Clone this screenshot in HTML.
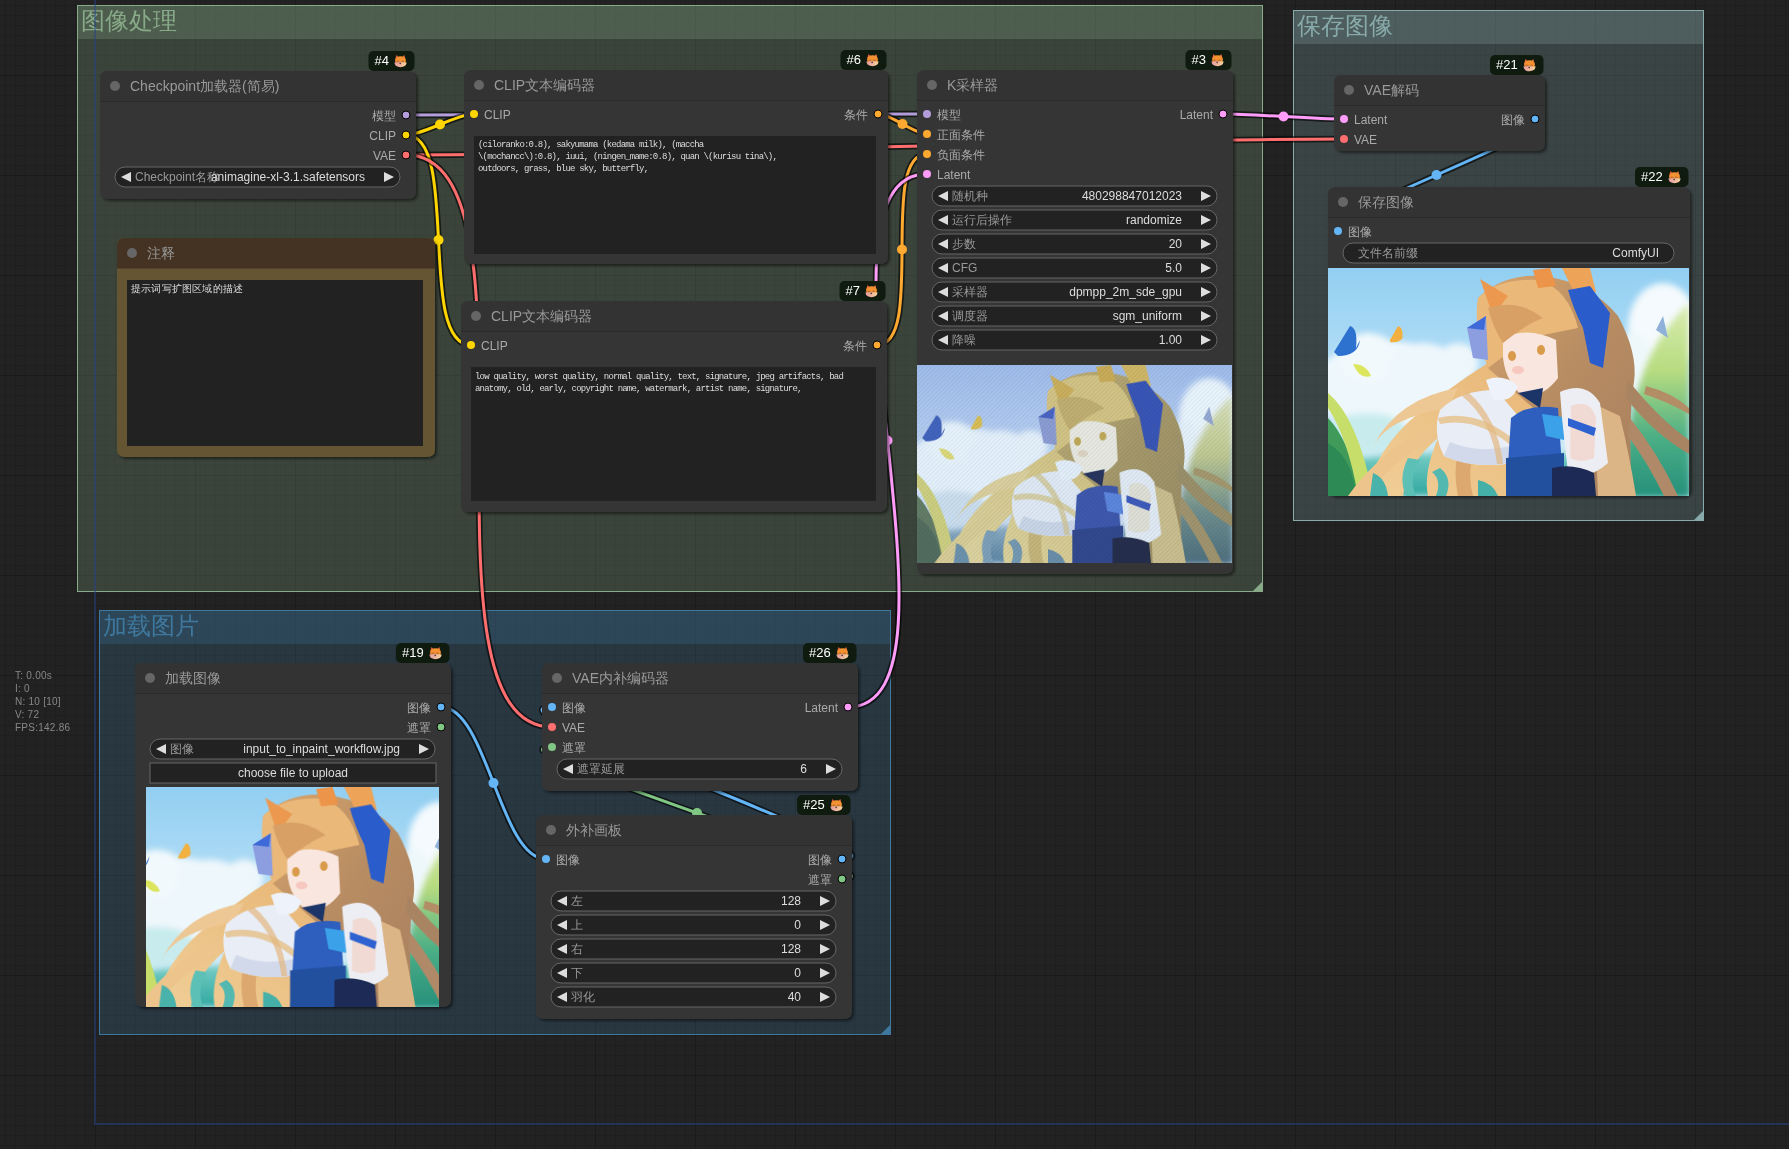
<!DOCTYPE html><html><head><meta charset="utf-8"><style>html,body{margin:0;padding:0;width:1789px;height:1149px;overflow:hidden;background:#222;} svg{display:block;will-change:transform}</style></head><body>
<svg width="1789" height="1149" viewBox="0 0 1789 1149" font-family="'Liberation Sans', sans-serif">
<defs>
<pattern id="gminor" width="10" height="10" patternUnits="userSpaceOnUse" x="5" y="5"><rect width="10" height="10" fill="#222"/><rect width="10" height="1" fill="#1e1e1e"/><rect width="1" height="10" fill="#1e1e1e"/></pattern>
<pattern id="gmajor" width="100" height="100" patternUnits="userSpaceOnUse" x="95" y="75"><rect width="100" height="1" fill="#1a1a1a"/><rect width="1" height="100" fill="#1a1a1a"/></pattern>
<filter id="sh" x="-5%" y="-5%" width="110%" height="110%"><feDropShadow dx="2" dy="2" stdDeviation="1.5" flood-color="#000" flood-opacity="0.5"/></filter>

<linearGradient id="skyg" x1="0" y1="0" x2="0" y2="1">
 <stop offset="0" stop-color="#92cff2"/><stop offset="0.45" stop-color="#b4def6"/><stop offset="1" stop-color="#dff1f8"/>
</linearGradient>
<radialGradient id="cloudg" cx="0.5" cy="0.5" r="0.5">
 <stop offset="0" stop-color="#ffffff"/><stop offset="0.7" stop-color="#f4fafd"/><stop offset="1" stop-color="#f4fafd" stop-opacity="0"/>
</radialGradient>
<linearGradient id="teal" x1="0" y1="0" x2="0" y2="1">
 <stop offset="0" stop-color="#7fd0c8"/><stop offset="1" stop-color="#2fa8a0"/>
</linearGradient>
<linearGradient id="plantR" x1="0" y1="0" x2="0" y2="1">
 <stop offset="0" stop-color="#d8ecb0"/><stop offset="0.35" stop-color="#b8dc80"/><stop offset="0.7" stop-color="#4aae86"/><stop offset="1" stop-color="#27907a"/>
</linearGradient>
<linearGradient id="hairR" x1="0" y1="0" x2="1" y2="1">
 <stop offset="0" stop-color="#d9a56c"/><stop offset="0.5" stop-color="#b88d63"/><stop offset="1" stop-color="#a88060"/>
</linearGradient>
<linearGradient id="hairL" x1="1" y1="0" x2="0" y2="1">
 <stop offset="0" stop-color="#e8b676"/><stop offset="1" stop-color="#f0cf98"/>
</linearGradient>
<filter id="soft" x="0" y="0" width="100%" height="100%"><feGaussianBlur stdDeviation="0.6"/></filter>
<filter id="blur3" x="-20%" y="-20%" width="140%" height="140%"><feGaussianBlur stdDeviation="3"/></filter>
<g id="scene">
 <rect width="361" height="228" fill="url(#skyg)"/>
 <g filter="url(#blur3)">
  <ellipse cx="60" cy="118" rx="75" ry="45" fill="#eef7fc"/>
  <ellipse cx="40" cy="90" rx="30" ry="25" fill="#f2f9fc"/>
  <ellipse cx="95" cy="100" rx="35" ry="25" fill="#eef7fc"/>
  <ellipse cx="130" cy="95" rx="20" ry="20" fill="#eef7fb"/>
  <ellipse cx="335" cy="60" rx="35" ry="45" fill="#f4fafd"/>
  <ellipse cx="305" cy="95" rx="20" ry="30" fill="#eef8fb"/>
  <ellipse cx="40" cy="165" rx="40" ry="20" fill="#c8ecee"/>
 </g>
 <path d="M0,228 L0,195 Q90,180 180,188 L361,180 L361,228 Z" fill="url(#teal)" filter="url(#blur3)"/>
 <path d="M361,35 Q325,70 312,115 Q298,160 292,228 L361,228 Z" fill="url(#plantR)" filter="url(#blur3)"/>
 <g filter="url(#soft)">
 <path d="M0,150 Q20,170 35,228 L0,228 Z" fill="#3f9a5a"/>
 <path d="M0,125 Q30,150 45,228 L30,228 Q20,170 0,140 Z" fill="#c8de6a"/>
 <path d="M0,175 Q25,190 28,228 L0,228 Z" fill="#2f8a55"/>
 <!-- left flowing hair -->
 <path d="M160,95 Q120,120 85,150 Q50,180 35,228 L75,228 Q80,195 110,170 Q95,205 100,228 L200,228 L205,140 Z" fill="url(#hairL)"/>
 <path d="M130,120 Q70,130 45,178 Q60,150 120,140 Z" fill="#eec894"/>
 <path d="M100,160 Q50,185 20,228 L40,228 Q60,195 105,172 Z" fill="#ecc48c"/>
 <path d="M150,150 Q120,180 130,228 L145,228 Q135,190 160,160 Z" fill="#dca870"/>
 <path d="M80,190 Q70,210 78,228 L88,228 Q80,210 92,192 Z" fill="#5cc0b6"/>
 <path d="M112,200 Q125,210 118,228 L108,228 Q114,212 104,204 Z" fill="#52b8b0"/><path d="M45,205 Q58,210 60,228 L42,228 Z" fill="#48b2aa"/><path d="M150,212 Q165,215 170,228 L150,228 Z" fill="#44b0a8"/>
 <!-- main hair mass -->
 <path d="M150,30 Q175,5 215,8 Q262,14 290,48 Q310,85 306,114 Q300,150 304,228 L262,228 Q250,180 232,150 L205,140 L160,100 Q148,60 150,30 Z" fill="url(#hairR)"/>
 <path d="M300,112 Q330,150 361,172 L361,186 Q325,165 298,130 Z" fill="#a98463"/>
 <path d="M302,150 Q330,185 350,228 L336,228 Q320,195 300,168 Z" fill="#b08a68"/>
 <path d="M318,118 Q345,125 361,140 L361,146 Q340,134 316,126 Z" fill="#b38d66"/>
 <path d="M266,136 L292,148 Q302,190 308,228 L270,228 Z" fill="#dcb586"/>
 
 
 <path d="M150,30 Q170,10 210,12 Q240,20 250,60 L200,70 L160,100 Q145,60 150,30 Z" fill="#eab878"/>
 
 <!-- ears -->
 <path d="M152,11 L180,28 L165,48 Z" fill="#ec9850"/>
 <path d="M205,2 L222,0 L228,18 L210,20 Z" fill="#ec9448"/>
 <path d="M234,0 L262,0 L268,24 L248,28 Z" fill="#eda458"/>
 <!-- face -->
 <path d="M175,70 Q200,58 228,72 L230,110 Q215,130 195,128 Q178,115 175,90 Z" fill="#f9e6de"/>
 <ellipse cx="190" cy="102" rx="6" ry="4" fill="#f6c8c0"/>
 <ellipse cx="184" cy="88" rx="4" ry="5" fill="#d99a48"/>
 <ellipse cx="213" cy="82" rx="4" ry="5" fill="#d99a48"/>
 <path d="M160,40 Q190,30 215,50 Q200,55 175,75 Q165,60 160,40 Z" fill="#d9a066"/>
 <!-- ribbons -->
 <path d="M240,22 L262,18 L282,45 L275,100 L262,95 L255,60 Q245,40 240,22 Z" fill="#2a5ccc"/>
 <path d="M139,60 L158,48 L160,92 L145,90 Z" fill="#8d9ee0"/><path d="M139,60 L158,48 L156,62 Z" fill="#3c6ad8"/>
 <!-- sleeve / glove -->
 <path d="M112,142 Q132,122 168,122 L192,150 Q196,182 178,196 Q142,200 116,188 Q104,165 112,142 Z" fill="#e9edf6"/>
 <path d="M122,174 Q150,186 183,178 L178,196 Q142,200 116,188 Z" fill="#d2d9ea"/><path d="M110,150 Q150,140 190,175 L186,180 Q150,148 112,156 Z" fill="#e6bf88" opacity="0.8"/><path d="M140,124 Q170,150 175,196 L169,196 Q164,152 134,128 Z" fill="#e2b880" opacity="0.7"/>
 <path d="M158,112 Q175,105 190,118 Q185,135 165,132 Z" fill="#eef2fa"/>
 <!-- dress -->
 <path d="M183,150 Q200,135 230,140 L236,228 L178,228 Z" fill="#2d5fbf"/>
 <path d="M178,190 L236,185 L236,228 L178,228 Z" fill="#244f9e"/>
 <path d="M214,146 L242,150 L236,172 L218,168 Z" fill="#3aa2ea"/>
 <path d="M190,125 L215,120 L212,140 Z" fill="#1f3468"/>
 <!-- frills and arm -->
 <path d="M232,124 Q258,112 272,135 L280,195 Q262,212 240,205 L234,150 Z" fill="#eceef4"/>
 <path d="M243,138 Q262,130 268,150 L266,190 Q252,196 242,190 Z" fill="#f2dad4"/>
 <path d="M240,150 L268,160 L266,168 L240,158 Z" fill="#2e62d0"/>
 <path d="M224,200 Q245,195 266,205 L268,228 L224,228 Z" fill="#1b2a55"/>
 <!-- butterflies & leaves -->
 <path d="M6,84 L22,58 Q30,60 28,80 L32,72 Q30,88 10,88 Z" fill="#2f72d0"/>
 <path d="M62,72 L70,58 Q76,60 74,70 L76,66 Q74,76 62,74 Z" fill="#f2b040"/>
 <path d="M25,96 Q38,96 43,108 Q32,112 25,96 Z" fill="#dce65c"/>
 <path d="M335,48 L340,70 L328,62 Z" fill="#8fb0d8"/>
 </g>
</g>
<filter id="noisy" x="0" y="0" width="100%" height="100%" color-interpolation-filters="sRGB">
 <feColorMatrix type="matrix" values="0.6 0.35 -0.05 0 0.04  0.3 0.6 0.05 0 0.03  0.0 0.2 0.8 0 0  0 0 0 1 0"/>
</filter>

<linearGradient id="foxchin" x1="0" y1="0" x2="1" y2="0"><stop offset="0" stop-color="#e59aa0"/><stop offset="1" stop-color="#f6d39a"/></linearGradient>
<g id="fox"><path d="M-5.6,-1 L-4,-6 L-1.2,-3.2 Z" fill="#e2603a"/><path d="M5.2,-1 L3.8,-6 L1.2,-3.2 Z" fill="#e8703a"/><ellipse cx="0" cy="-0.3" rx="5.4" ry="4.4" fill="#f39232"/><path d="M-6.2,1.6 Q0,0.6 6.2,1.6 Q5.4,6.2 0,6.2 Q-5.4,6.2 -6.2,1.6 Z" fill="url(#foxchin)"/><ellipse cx="-2.6" cy="0.4" rx="1.6" ry="0.9" fill="#b8642c" opacity="0.7"/><ellipse cx="2" cy="0.4" rx="1.6" ry="0.9" fill="#b8642c" opacity="0.7"/><circle cx="-0.3" cy="2.3" r="0.9" fill="#5a3a44"/></g>
<pattern id="hatch" width="3" height="3" patternUnits="userSpaceOnUse" patternTransform="rotate(45)"><rect width="1" height="3" fill="#000" fill-opacity="0.05"/></pattern>
</defs>
<rect width="1789" height="1149" fill="url(#gminor)"/>
<rect width="1789" height="1149" fill="url(#gmajor)"/>
<g>
<rect x="77" y="5" width="1185" height="586" fill="#88AA88" fill-opacity="0.25"/>
<rect x="77" y="5" width="1185" height="34" fill="#88AA88" fill-opacity="0.25"/>
<rect x="77.5" y="5.5" width="1185" height="586" fill="none" stroke="#88AA88" stroke-width="1"/>
<path d="M1262.5,591.5 L1252.5,591.5 L1262.5,581.5 Z" fill="#88AA88"/>
<text x="81" y="29" font-size="24" fill="#88AA88">图像处理</text>
</g>
<g>
<rect x="1293" y="10" width="410" height="510" fill="#88AAAA" fill-opacity="0.25"/>
<rect x="1293" y="10" width="410" height="34" fill="#88AAAA" fill-opacity="0.25"/>
<rect x="1293.5" y="10.5" width="410" height="510" fill="none" stroke="#88AAAA" stroke-width="1"/>
<path d="M1703.5,520.5 L1693.5,520.5 L1703.5,510.5 Z" fill="#88AAAA"/>
<text x="1297" y="34" font-size="24" fill="#88AAAA">保存图像</text>
</g>
<g>
<rect x="99" y="610" width="791" height="424" fill="#3f789e" fill-opacity="0.25"/>
<rect x="99" y="610" width="791" height="34" fill="#3f789e" fill-opacity="0.25"/>
<rect x="99.5" y="610.5" width="791" height="424" fill="none" stroke="#3f789e" stroke-width="1"/>
<path d="M890.5,1034.5 L880.5,1034.5 L890.5,1024.5 Z" fill="#3f789e"/>
<text x="103" y="634" font-size="24" fill="#3f789e">加载图片</text>
</g>
<path d="M95,0 L95,1124 L1789,1124" fill="none" stroke="#28468a" stroke-opacity="0.5" stroke-width="2"/>
<g fill="none">
<path d="M406,115 C536.25,115.00 796.75,114.00 927,114" stroke="#000" stroke-opacity="0.6" stroke-width="6.5"/>
<path d="M406,115 C536.25,115.00 796.75,114.00 927,114" stroke="#B39DDB" stroke-width="3"/>
<circle cx="666.50" cy="114.50" r="5" fill="#B39DDB"/>
<path d="M878,114 C891.23,114.00 913.77,134.00 927,134" stroke="#000" stroke-opacity="0.6" stroke-width="6.5"/>
<path d="M878,114 C891.23,114.00 913.77,134.00 927,134" stroke="#FFA931" stroke-width="3"/>
<circle cx="902.50" cy="124.00" r="5" fill="#FFA931"/>
<path d="M877,345 C926.36,345.00 877.64,154.00 927,154" stroke="#000" stroke-opacity="0.6" stroke-width="6.5"/>
<path d="M877,345 C926.36,345.00 877.64,154.00 927,154" stroke="#FFA931" stroke-width="3"/>
<circle cx="902.00" cy="249.50" r="5" fill="#FFA931"/>
<path d="M848,707 C982.71,707.00 792.29,174.00 927,174" stroke="#000" stroke-opacity="0.6" stroke-width="6.5"/>
<path d="M848,707 C982.71,707.00 792.29,174.00 927,174" stroke="#FF9CF9" stroke-width="3"/>
<circle cx="887.50" cy="440.50" r="5" fill="#FF9CF9"/>
<path d="M406,135 C423.79,135.00 456.21,114.00 474,114" stroke="#000" stroke-opacity="0.6" stroke-width="6.5"/>
<path d="M406,135 C423.79,135.00 456.21,114.00 474,114" stroke="#FFD500" stroke-width="3"/>
<circle cx="440.00" cy="124.50" r="5" fill="#FFD500"/>
<path d="M1223,114 C1253.28,114.00 1313.72,119.00 1344,119" stroke="#000" stroke-opacity="0.6" stroke-width="6.5"/>
<path d="M1223,114 C1253.28,114.00 1313.72,119.00 1344,119" stroke="#FF9CF9" stroke-width="3"/>
<circle cx="1283.50" cy="116.50" r="5" fill="#FF9CF9"/>
<path d="M406,155 C640.53,155.00 1109.47,139.00 1344,139" stroke="#000" stroke-opacity="0.6" stroke-width="6.5"/>
<path d="M406,155 C640.53,155.00 1109.47,139.00 1344,139" stroke="#FF6E6E" stroke-width="3"/>
<circle cx="875.00" cy="147.00" r="5" fill="#FF6E6E"/>
<path d="M406,135 C460.96,135.00 416.04,345.00 471,345" stroke="#000" stroke-opacity="0.6" stroke-width="6.5"/>
<path d="M406,135 C460.96,135.00 416.04,345.00 471,345" stroke="#FFD500" stroke-width="3"/>
<circle cx="438.50" cy="240.00" r="5" fill="#FFD500"/>
<path d="M1535,119 C1591.65,119.00 1281.35,231.00 1338,231" stroke="#000" stroke-opacity="0.6" stroke-width="6.5"/>
<path d="M1535,119 C1591.65,119.00 1281.35,231.00 1338,231" stroke="#64B5F6" stroke-width="3"/>
<circle cx="1436.50" cy="175.00" r="5" fill="#64B5F6"/>
<path d="M441,707 C487.19,707.00 499.81,859.00 546,859" stroke="#000" stroke-opacity="0.6" stroke-width="6.5"/>
<path d="M441,707 C487.19,707.00 499.81,859.00 546,859" stroke="#64B5F6" stroke-width="3"/>
<circle cx="493.50" cy="783.00" r="5" fill="#64B5F6"/>
<path d="M842,859 C923.86,859.00 470.14,707.00 552,707" stroke="#000" stroke-opacity="0.6" stroke-width="6.5"/>
<path d="M842,859 C923.86,859.00 470.14,707.00 552,707" stroke="#64B5F6" stroke-width="3"/>
<circle cx="697.00" cy="783.00" r="5" fill="#64B5F6"/>
<path d="M406,155 C553.58,155.00 404.42,727.00 552,727" stroke="#000" stroke-opacity="0.6" stroke-width="6.5"/>
<path d="M406,155 C553.58,155.00 404.42,727.00 552,727" stroke="#FF6E6E" stroke-width="3"/>
<circle cx="479.00" cy="441.00" r="5" fill="#FF6E6E"/>
<path d="M842,879 C921.66,879.00 472.34,747.00 552,747" stroke="#000" stroke-opacity="0.6" stroke-width="6.5"/>
<path d="M842,879 C921.66,879.00 472.34,747.00 552,747" stroke="#81C784" stroke-width="3"/>
<circle cx="697.00" cy="813.00" r="5" fill="#81C784"/>
</g>
<g>
<path d="M108,71 L408,71 Q416,71 416,79 L416,191 Q416,199 408,199 L108,199 Q100,199 100,191 L100,79 Q100,71 108,71 Z" fill="#353535" filter="url(#sh)"/>
<path d="M108,71 L408,71 Q416,71 416,79 L416,101 Q416,101 416,101 L100,101 Q100,101 100,101 L100,79 Q100,71 108,71 Z" fill="#333"/>
<rect x="100" y="101" width="316" height="1" fill="#000" fill-opacity="0.2"/>
<circle cx="115" cy="86" r="5" fill="#666"/>
<text x="130" y="91" font-size="14" fill="#999">Checkpoint加载器(简易)</text>
<circle cx="406" cy="115" r="4" fill="#B39DDB" stroke="#000" stroke-width="1"/>
<text x="396" y="120" font-size="12" fill="#AAA" text-anchor="end">模型</text>
<circle cx="406" cy="135" r="4" fill="#FFD500" stroke="#000" stroke-width="1"/>
<text x="396" y="140" font-size="12" fill="#AAA" text-anchor="end">CLIP</text>
<circle cx="406" cy="155" r="4" fill="#FF6E6E" stroke="#000" stroke-width="1"/>
<text x="396" y="160" font-size="12" fill="#AAA" text-anchor="end">VAE</text>
<rect x="115" y="167" width="285" height="20" rx="10" ry="10" fill="#222" stroke="#666" stroke-width="1"/>
<path d="M131,172 L121,177 L131,182 Z" fill="#DDD"/>
<path d="M384,172 L394,177 L384,182 Z" fill="#DDD"/>
<text x="135" y="181" font-size="12" fill="#999">Checkpoint名称</text>
<text x="365" y="181" font-size="12" fill="#DDD" text-anchor="end">animagine-xl-3.1.safetensors</text>
</g>
<rect x="368.5" y="51" width="46" height="20" rx="5" fill="#0f1b0f"/>
<text x="374.5" y="65.3" font-size="13" fill="#fff">#4</text>
<use href="#fox" x="400.5" y="61"/>
<g>
<path d="M125,238 L427,238 Q435,238 435,246 L435,449 Q435,457 427,457 L125,457 Q117,457 117,449 L117,246 Q117,238 125,238 Z" fill="#653" filter="url(#sh)"/>
<path d="M125,238 L427,238 Q435,238 435,246 L435,268 Q435,268 435,268 L117,268 Q117,268 117,268 L117,246 Q117,238 125,238 Z" fill="#432"/>
<rect x="117" y="268" width="318" height="1" fill="#000" fill-opacity="0.2"/>
<circle cx="132" cy="253" r="5" fill="#666"/>
<text x="147" y="258" font-size="14" fill="#999">注释</text>
</g>
<rect x="127" y="280" width="296" height="166" fill="#222"/>
<text x="131" y="292" font-family="'Liberation Sans', sans-serif" font-size="9.6" letter-spacing="0.2" fill="#DDD" xml:space="preserve">提示词写扩图区域的描述</text>
<g>
<path d="M472,70 L880,70 Q888,70 888,78 L888,256 Q888,264 880,264 L472,264 Q464,264 464,256 L464,78 Q464,70 472,70 Z" fill="#353535" filter="url(#sh)"/>
<path d="M472,70 L880,70 Q888,70 888,78 L888,100 Q888,100 888,100 L464,100 Q464,100 464,100 L464,78 Q464,70 472,70 Z" fill="#333"/>
<rect x="464" y="100" width="424" height="1" fill="#000" fill-opacity="0.2"/>
<circle cx="479" cy="85" r="5" fill="#666"/>
<text x="494" y="90" font-size="14" fill="#999">CLIP文本编码器</text>
<circle cx="474" cy="114" r="4" fill="#FFD500"/>
<text x="484" y="119" font-size="12" fill="#AAA">CLIP</text>
<circle cx="878" cy="114" r="4" fill="#FFA931" stroke="#000" stroke-width="1"/>
<text x="868" y="119" font-size="12" fill="#AAA" text-anchor="end">条件</text>
</g>
<rect x="474" y="136" width="402" height="118" fill="#222"/>
<text x="478" y="147.2" font-family="'Liberation Mono', monospace" font-size="9" letter-spacing="-0.8" fill="#DDD" xml:space="preserve">(ciloranko:0.8), sakyumama (kedama milk), (maccha</text>
<text x="478" y="159.2" font-family="'Liberation Mono', monospace" font-size="9" letter-spacing="-0.8" fill="#DDD" xml:space="preserve">\(mochancc\):0.8), iuui, (ningen_mame:0.8), quan \(kurisu tina\),</text>
<text x="478" y="171.2" font-family="'Liberation Mono', monospace" font-size="9" letter-spacing="-0.8" fill="#DDD" xml:space="preserve">outdoors, grass, blue sky, butterfly,</text>
<rect x="840.5" y="50" width="46" height="20" rx="5" fill="#0f1b0f"/>
<text x="846.5" y="64.3" font-size="13" fill="#fff">#6</text>
<use href="#fox" x="872.5" y="60"/>
<g>
<path d="M469,301 L879,301 Q887,301 887,309 L887,504 Q887,512 879,512 L469,512 Q461,512 461,504 L461,309 Q461,301 469,301 Z" fill="#353535" filter="url(#sh)"/>
<path d="M469,301 L879,301 Q887,301 887,309 L887,331 Q887,331 887,331 L461,331 Q461,331 461,331 L461,309 Q461,301 469,301 Z" fill="#333"/>
<rect x="461" y="331" width="426" height="1" fill="#000" fill-opacity="0.2"/>
<circle cx="476" cy="316" r="5" fill="#666"/>
<text x="491" y="321" font-size="14" fill="#999">CLIP文本编码器</text>
<circle cx="471" cy="345" r="4" fill="#FFD500"/>
<text x="481" y="350" font-size="12" fill="#AAA">CLIP</text>
<circle cx="877" cy="345" r="4" fill="#FFA931" stroke="#000" stroke-width="1"/>
<text x="867" y="350" font-size="12" fill="#AAA" text-anchor="end">条件</text>
</g>
<rect x="471" y="367" width="405" height="134" fill="#222"/>
<text x="475" y="378.5" font-family="'Liberation Mono', monospace" font-size="9" letter-spacing="-0.8" fill="#DDD" xml:space="preserve">low quality, worst quality, normal quality, text, signature, jpeg artifacts, bad</text>
<text x="475" y="390.5" font-family="'Liberation Mono', monospace" font-size="9" letter-spacing="-0.8" fill="#DDD" xml:space="preserve">anatomy, old, early, copyright name, watermark, artist name, signature,</text>
<rect x="839.5" y="281" width="46" height="20" rx="5" fill="#0f1b0f"/>
<text x="845.5" y="295.3" font-size="13" fill="#fff">#7</text>
<use href="#fox" x="871.5" y="291"/>
<g>
<path d="M925,70 L1225,70 Q1233,70 1233,78 L1233,566 Q1233,574 1225,574 L925,574 Q917,574 917,566 L917,78 Q917,70 925,70 Z" fill="#353535" filter="url(#sh)"/>
<path d="M925,70 L1225,70 Q1233,70 1233,78 L1233,100 Q1233,100 1233,100 L917,100 Q917,100 917,100 L917,78 Q917,70 925,70 Z" fill="#333"/>
<rect x="917" y="100" width="316" height="1" fill="#000" fill-opacity="0.2"/>
<circle cx="932" cy="85" r="5" fill="#666"/>
<text x="947" y="90" font-size="14" fill="#999">K采样器</text>
<circle cx="927" cy="114" r="4" fill="#B39DDB"/>
<text x="937" y="119" font-size="12" fill="#AAA">模型</text>
<circle cx="927" cy="134" r="4" fill="#FFA931"/>
<text x="937" y="139" font-size="12" fill="#AAA">正面条件</text>
<circle cx="927" cy="154" r="4" fill="#FFA931"/>
<text x="937" y="159" font-size="12" fill="#AAA">负面条件</text>
<circle cx="927" cy="174" r="4" fill="#FF9CF9"/>
<text x="937" y="179" font-size="12" fill="#AAA">Latent</text>
<circle cx="1223" cy="114" r="4" fill="#FF9CF9" stroke="#000" stroke-width="1"/>
<text x="1213" y="119" font-size="12" fill="#AAA" text-anchor="end">Latent</text>
<rect x="932" y="186" width="285" height="20" rx="10" ry="10" fill="#222" stroke="#666" stroke-width="1"/>
<path d="M948,191 L938,196 L948,201 Z" fill="#DDD"/>
<path d="M1201,191 L1211,196 L1201,201 Z" fill="#DDD"/>
<text x="952" y="200" font-size="12" fill="#999">随机种</text>
<text x="1182" y="200" font-size="12" fill="#DDD" text-anchor="end">480298847012023</text>
<rect x="932" y="210" width="285" height="20" rx="10" ry="10" fill="#222" stroke="#666" stroke-width="1"/>
<path d="M948,215 L938,220 L948,225 Z" fill="#DDD"/>
<path d="M1201,215 L1211,220 L1201,225 Z" fill="#DDD"/>
<text x="952" y="224" font-size="12" fill="#999">运行后操作</text>
<text x="1182" y="224" font-size="12" fill="#DDD" text-anchor="end">randomize</text>
<rect x="932" y="234" width="285" height="20" rx="10" ry="10" fill="#222" stroke="#666" stroke-width="1"/>
<path d="M948,239 L938,244 L948,249 Z" fill="#DDD"/>
<path d="M1201,239 L1211,244 L1201,249 Z" fill="#DDD"/>
<text x="952" y="248" font-size="12" fill="#999">步数</text>
<text x="1182" y="248" font-size="12" fill="#DDD" text-anchor="end">20</text>
<rect x="932" y="258" width="285" height="20" rx="10" ry="10" fill="#222" stroke="#666" stroke-width="1"/>
<path d="M948,263 L938,268 L948,273 Z" fill="#DDD"/>
<path d="M1201,263 L1211,268 L1201,273 Z" fill="#DDD"/>
<text x="952" y="272" font-size="12" fill="#999">CFG</text>
<text x="1182" y="272" font-size="12" fill="#DDD" text-anchor="end">5.0</text>
<rect x="932" y="282" width="285" height="20" rx="10" ry="10" fill="#222" stroke="#666" stroke-width="1"/>
<path d="M948,287 L938,292 L948,297 Z" fill="#DDD"/>
<path d="M1201,287 L1211,292 L1201,297 Z" fill="#DDD"/>
<text x="952" y="296" font-size="12" fill="#999">采样器</text>
<text x="1182" y="296" font-size="12" fill="#DDD" text-anchor="end">dpmpp_2m_sde_gpu</text>
<rect x="932" y="306" width="285" height="20" rx="10" ry="10" fill="#222" stroke="#666" stroke-width="1"/>
<path d="M948,311 L938,316 L948,321 Z" fill="#DDD"/>
<path d="M1201,311 L1211,316 L1201,321 Z" fill="#DDD"/>
<text x="952" y="320" font-size="12" fill="#999">调度器</text>
<text x="1182" y="320" font-size="12" fill="#DDD" text-anchor="end">sgm_uniform</text>
<rect x="932" y="330" width="285" height="20" rx="10" ry="10" fill="#222" stroke="#666" stroke-width="1"/>
<path d="M948,335 L938,340 L948,345 Z" fill="#DDD"/>
<path d="M1201,335 L1211,340 L1201,345 Z" fill="#DDD"/>
<text x="952" y="344" font-size="12" fill="#999">降噪</text>
<text x="1182" y="344" font-size="12" fill="#DDD" text-anchor="end">1.00</text>
</g>
<svg x="917" y="365" width="315" height="198" viewBox="0 0 361 228" preserveAspectRatio="none"><use href="#scene" filter="url(#noisy)"/></svg>
<rect x="917" y="365" width="315" height="198" fill="url(#hatch)"/>
<rect x="1185.5" y="50" width="46" height="20" rx="5" fill="#0f1b0f"/>
<text x="1191.5" y="64.3" font-size="13" fill="#fff">#3</text>
<use href="#fox" x="1217.5" y="60"/>
<g>
<path d="M1342,75 L1537,75 Q1545,75 1545,83 L1545,143 Q1545,151 1537,151 L1342,151 Q1334,151 1334,143 L1334,83 Q1334,75 1342,75 Z" fill="#353535" filter="url(#sh)"/>
<path d="M1342,75 L1537,75 Q1545,75 1545,83 L1545,105 Q1545,105 1545,105 L1334,105 Q1334,105 1334,105 L1334,83 Q1334,75 1342,75 Z" fill="#333"/>
<rect x="1334" y="105" width="211" height="1" fill="#000" fill-opacity="0.2"/>
<circle cx="1349" cy="90" r="5" fill="#666"/>
<text x="1364" y="95" font-size="14" fill="#999">VAE解码</text>
<circle cx="1344" cy="119" r="4" fill="#FF9CF9"/>
<text x="1354" y="124" font-size="12" fill="#AAA">Latent</text>
<circle cx="1344" cy="139" r="4" fill="#FF6E6E"/>
<text x="1354" y="144" font-size="12" fill="#AAA">VAE</text>
<circle cx="1535" cy="119" r="4" fill="#64B5F6" stroke="#000" stroke-width="1"/>
<text x="1525" y="124" font-size="12" fill="#AAA" text-anchor="end">图像</text>
</g>
<rect x="1490.0" y="55" width="53.5" height="20" rx="5" fill="#0f1b0f"/>
<text x="1496.0" y="69.3" font-size="13" fill="#fff">#21</text>
<use href="#fox" x="1529.5" y="65"/>
<g>
<path d="M1336,187 L1682,187 Q1690,187 1690,195 L1690,488 Q1690,496 1682,496 L1336,496 Q1328,496 1328,488 L1328,195 Q1328,187 1336,187 Z" fill="#353535" filter="url(#sh)"/>
<path d="M1336,187 L1682,187 Q1690,187 1690,195 L1690,217 Q1690,217 1690,217 L1328,217 Q1328,217 1328,217 L1328,195 Q1328,187 1336,187 Z" fill="#333"/>
<rect x="1328" y="217" width="362" height="1" fill="#000" fill-opacity="0.2"/>
<circle cx="1343" cy="202" r="5" fill="#666"/>
<text x="1358" y="207" font-size="14" fill="#999">保存图像</text>
<circle cx="1338" cy="231" r="4" fill="#64B5F6"/>
<text x="1348" y="236" font-size="12" fill="#AAA">图像</text>
<rect x="1343" y="243" width="331" height="20" rx="10" ry="10" fill="#222" stroke="#666" stroke-width="1"/>
<text x="1358" y="257" font-size="12" fill="#999">文件名前缀</text>
<text x="1659" y="257" font-size="12" fill="#DDD" text-anchor="end">ComfyUI</text>
</g>
<svg x="1328" y="268" width="361" height="228" viewBox="0 0 361 228" preserveAspectRatio="none"><use href="#scene"/></svg>
<rect x="1635.0" y="167" width="53.5" height="20" rx="5" fill="#0f1b0f"/>
<text x="1641.0" y="181.3" font-size="13" fill="#fff">#22</text>
<use href="#fox" x="1674.5" y="177"/>
<g>
<path d="M143,663 L443,663 Q451,663 451,671 L451,999 Q451,1007 443,1007 L143,1007 Q135,1007 135,999 L135,671 Q135,663 143,663 Z" fill="#353535" filter="url(#sh)"/>
<path d="M143,663 L443,663 Q451,663 451,671 L451,693 Q451,693 451,693 L135,693 Q135,693 135,693 L135,671 Q135,663 143,663 Z" fill="#333"/>
<rect x="135" y="693" width="316" height="1" fill="#000" fill-opacity="0.2"/>
<circle cx="150" cy="678" r="5" fill="#666"/>
<text x="165" y="683" font-size="14" fill="#999">加载图像</text>
<circle cx="441" cy="707" r="4" fill="#64B5F6" stroke="#000" stroke-width="1"/>
<text x="431" y="712" font-size="12" fill="#AAA" text-anchor="end">图像</text>
<circle cx="441" cy="727" r="4" fill="#81C784" stroke="#000" stroke-width="1"/>
<text x="431" y="732" font-size="12" fill="#AAA" text-anchor="end">遮罩</text>
<rect x="150" y="739" width="285" height="20" rx="10" ry="10" fill="#222" stroke="#666" stroke-width="1"/>
<path d="M166,744 L156,749 L166,754 Z" fill="#DDD"/>
<path d="M419,744 L429,749 L419,754 Z" fill="#DDD"/>
<text x="170" y="753" font-size="12" fill="#999">图像</text>
<text x="400" y="753" font-size="12" fill="#DDD" text-anchor="end">input_to_inpaint_workflow.jpg</text>
<rect x="150" y="763" width="286" height="20" fill="#222" stroke="#666" stroke-width="1"/>
<text x="293.0" y="777" font-size="12" fill="#DDD" text-anchor="middle">choose file to upload</text>
</g>
<svg x="146" y="787" width="293" height="220" viewBox="28.5 0 304 228" preserveAspectRatio="none"><use href="#scene"/></svg>
<rect x="396.0" y="643" width="53.5" height="20" rx="5" fill="#0f1b0f"/>
<text x="402.0" y="657.3" font-size="13" fill="#fff">#19</text>
<use href="#fox" x="435.5" y="653"/>
<g>
<path d="M550,663 L850,663 Q858,663 858,671 L858,783 Q858,791 850,791 L550,791 Q542,791 542,783 L542,671 Q542,663 550,663 Z" fill="#353535" filter="url(#sh)"/>
<path d="M550,663 L850,663 Q858,663 858,671 L858,693 Q858,693 858,693 L542,693 Q542,693 542,693 L542,671 Q542,663 550,663 Z" fill="#333"/>
<rect x="542" y="693" width="316" height="1" fill="#000" fill-opacity="0.2"/>
<circle cx="557" cy="678" r="5" fill="#666"/>
<text x="572" y="683" font-size="14" fill="#999">VAE内补编码器</text>
<circle cx="552" cy="707" r="4" fill="#64B5F6"/>
<text x="562" y="712" font-size="12" fill="#AAA">图像</text>
<circle cx="552" cy="727" r="4" fill="#FF6E6E"/>
<text x="562" y="732" font-size="12" fill="#AAA">VAE</text>
<circle cx="552" cy="747" r="4" fill="#81C784"/>
<text x="562" y="752" font-size="12" fill="#AAA">遮罩</text>
<circle cx="848" cy="707" r="4" fill="#FF9CF9" stroke="#000" stroke-width="1"/>
<text x="838" y="712" font-size="12" fill="#AAA" text-anchor="end">Latent</text>
<rect x="557" y="759" width="285" height="20" rx="10" ry="10" fill="#222" stroke="#666" stroke-width="1"/>
<path d="M573,764 L563,769 L573,774 Z" fill="#DDD"/>
<path d="M826,764 L836,769 L826,774 Z" fill="#DDD"/>
<text x="577" y="773" font-size="12" fill="#999">遮罩延展</text>
<text x="807" y="773" font-size="12" fill="#DDD" text-anchor="end">6</text>
</g>
<rect x="803.0" y="643" width="53.5" height="20" rx="5" fill="#0f1b0f"/>
<text x="809.0" y="657.3" font-size="13" fill="#fff">#26</text>
<use href="#fox" x="842.5" y="653"/>
<g>
<path d="M544,815 L844,815 Q852,815 852,823 L852,1011 Q852,1019 844,1019 L544,1019 Q536,1019 536,1011 L536,823 Q536,815 544,815 Z" fill="#353535" filter="url(#sh)"/>
<path d="M544,815 L844,815 Q852,815 852,823 L852,845 Q852,845 852,845 L536,845 Q536,845 536,845 L536,823 Q536,815 544,815 Z" fill="#333"/>
<rect x="536" y="845" width="316" height="1" fill="#000" fill-opacity="0.2"/>
<circle cx="551" cy="830" r="5" fill="#666"/>
<text x="566" y="835" font-size="14" fill="#999">外补画板</text>
<circle cx="546" cy="859" r="4" fill="#64B5F6"/>
<text x="556" y="864" font-size="12" fill="#AAA">图像</text>
<circle cx="842" cy="859" r="4" fill="#64B5F6" stroke="#000" stroke-width="1"/>
<text x="832" y="864" font-size="12" fill="#AAA" text-anchor="end">图像</text>
<circle cx="842" cy="879" r="4" fill="#81C784" stroke="#000" stroke-width="1"/>
<text x="832" y="884" font-size="12" fill="#AAA" text-anchor="end">遮罩</text>
<rect x="551" y="891" width="285" height="20" rx="10" ry="10" fill="#222" stroke="#666" stroke-width="1"/>
<path d="M567,896 L557,901 L567,906 Z" fill="#DDD"/>
<path d="M820,896 L830,901 L820,906 Z" fill="#DDD"/>
<text x="571" y="905" font-size="12" fill="#999">左</text>
<text x="801" y="905" font-size="12" fill="#DDD" text-anchor="end">128</text>
<rect x="551" y="915" width="285" height="20" rx="10" ry="10" fill="#222" stroke="#666" stroke-width="1"/>
<path d="M567,920 L557,925 L567,930 Z" fill="#DDD"/>
<path d="M820,920 L830,925 L820,930 Z" fill="#DDD"/>
<text x="571" y="929" font-size="12" fill="#999">上</text>
<text x="801" y="929" font-size="12" fill="#DDD" text-anchor="end">0</text>
<rect x="551" y="939" width="285" height="20" rx="10" ry="10" fill="#222" stroke="#666" stroke-width="1"/>
<path d="M567,944 L557,949 L567,954 Z" fill="#DDD"/>
<path d="M820,944 L830,949 L820,954 Z" fill="#DDD"/>
<text x="571" y="953" font-size="12" fill="#999">右</text>
<text x="801" y="953" font-size="12" fill="#DDD" text-anchor="end">128</text>
<rect x="551" y="963" width="285" height="20" rx="10" ry="10" fill="#222" stroke="#666" stroke-width="1"/>
<path d="M567,968 L557,973 L567,978 Z" fill="#DDD"/>
<path d="M820,968 L830,973 L820,978 Z" fill="#DDD"/>
<text x="571" y="977" font-size="12" fill="#999">下</text>
<text x="801" y="977" font-size="12" fill="#DDD" text-anchor="end">0</text>
<rect x="551" y="987" width="285" height="20" rx="10" ry="10" fill="#222" stroke="#666" stroke-width="1"/>
<path d="M567,992 L557,997 L567,1002 Z" fill="#DDD"/>
<path d="M820,992 L830,997 L820,1002 Z" fill="#DDD"/>
<text x="571" y="1001" font-size="12" fill="#999">羽化</text>
<text x="801" y="1001" font-size="12" fill="#DDD" text-anchor="end">40</text>
</g>
<rect x="797.0" y="795" width="53.5" height="20" rx="5" fill="#0f1b0f"/>
<text x="803.0" y="809.3" font-size="13" fill="#fff">#25</text>
<use href="#fox" x="836.5" y="805"/>
<text x="15" y="679" font-size="10" letter-spacing="0.25" fill="#888">T: 0.00s</text>
<text x="15" y="692" font-size="10" letter-spacing="0.25" fill="#888">I: 0</text>
<text x="15" y="705" font-size="10" letter-spacing="0.25" fill="#888">N: 10 [10]</text>
<text x="15" y="718" font-size="10" letter-spacing="0.25" fill="#888">V: 72</text>
<text x="15" y="731" font-size="10" letter-spacing="0.25" fill="#888">FPS:142.86</text>
</svg></body></html>
